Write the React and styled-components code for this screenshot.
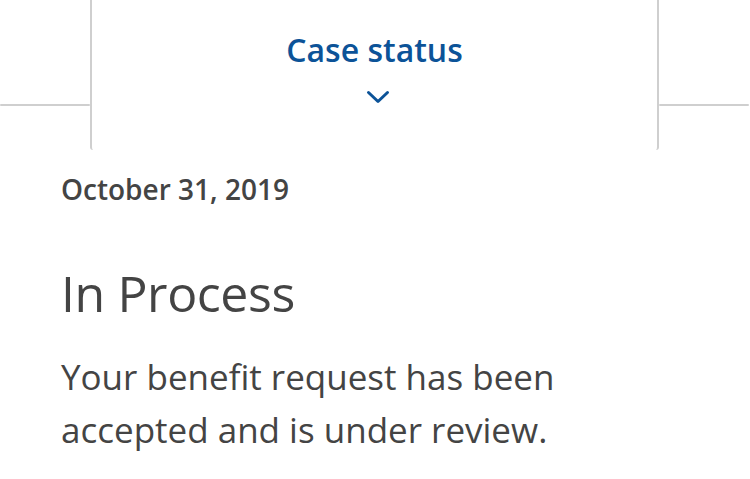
import React from "react";
import styled, { createGlobalStyle } from "styled-components";

const GlobalStyle = createGlobalStyle`
  html, body {
    margin: 0;
    background: #fff;
  }
  body {
    font-family: "Open Sans", "Noto Sans", sans-serif;
    color: #424242;
  }
`;

function Chevron() {
  return (
    <svg width="24" height="14" viewBox="0 0 24 14" fill="none">
      <path
        d="M2.5 2.5 L12 11.5 L21.5 2.5"
        stroke="#0c5398"
        strokeWidth="3"
        strokeLinecap="round"
        strokeLinejoin="round"
      />
    </svg>
  );
}

function App() {
  return (
    <Page>
      <GlobalStyle />
      <TabRow>
        <Rule />
        <Tab>
          <TabTitle>Case status</TabTitle>
          <Chevron />
        </Tab>
        <Rule />
      </TabRow>
      <Content>
        <DateLine>October 31, 2019</DateLine>
        <Status>In Process</Status>
        <Message>Your benefit request has been accepted and is under review.</Message>
      </Content>
    </Page>
  );
}

const Page = styled.div`
  width: 750px;
  height: 479px;
  overflow: hidden;
`;

const TabRow = styled.div`
  display: grid;
  grid-template-columns: 90px 569px 1fr;
  padding-left: 1px;
  margin-right: 1px;
  margin-left: -1px;
`;

const Rule = styled.div`
  align-self: start;
  margin-top: 104px;
  height: 2px;
  background: #cfcfcf;
  border-radius: 1px;
`;

const Tab = styled.div`
  height: 150px;
  box-sizing: border-box;
  border-left: 2px solid #cfcfcf;
  border-right: 2px solid #cfcfcf;
  border-radius: 0 0 3px 3px;
  display: flex;
  flex-direction: column;
  align-items: center;
  padding-top: 34px;
  svg {
    margin-top: 24px;
    margin-left: 6px;
  }
`;

const TabTitle = styled.div`
  font-size: 32px;
  line-height: 32px;
  font-weight: 600;
  color: #0c5398;
`;

const Content = styled.div`
  padding: 21px 0 0 61px;
`;

const DateLine = styled.div`
  font-size: 28px;
  line-height: 36px;
  font-weight: 600;
  color: #444;
`;

const Status = styled.h2`
  margin: 56px 0 0;
  font-size: 50px;
  line-height: 60px;
  font-weight: 400;
  letter-spacing: -0.4px;
  color: #444;
`;

const Message = styled.p`
  margin: 27px 0 0;
  max-width: 530px;
  font-size: 35px;
  line-height: 53px;
  font-weight: 400;
  color: #444;
`;

export default App;
